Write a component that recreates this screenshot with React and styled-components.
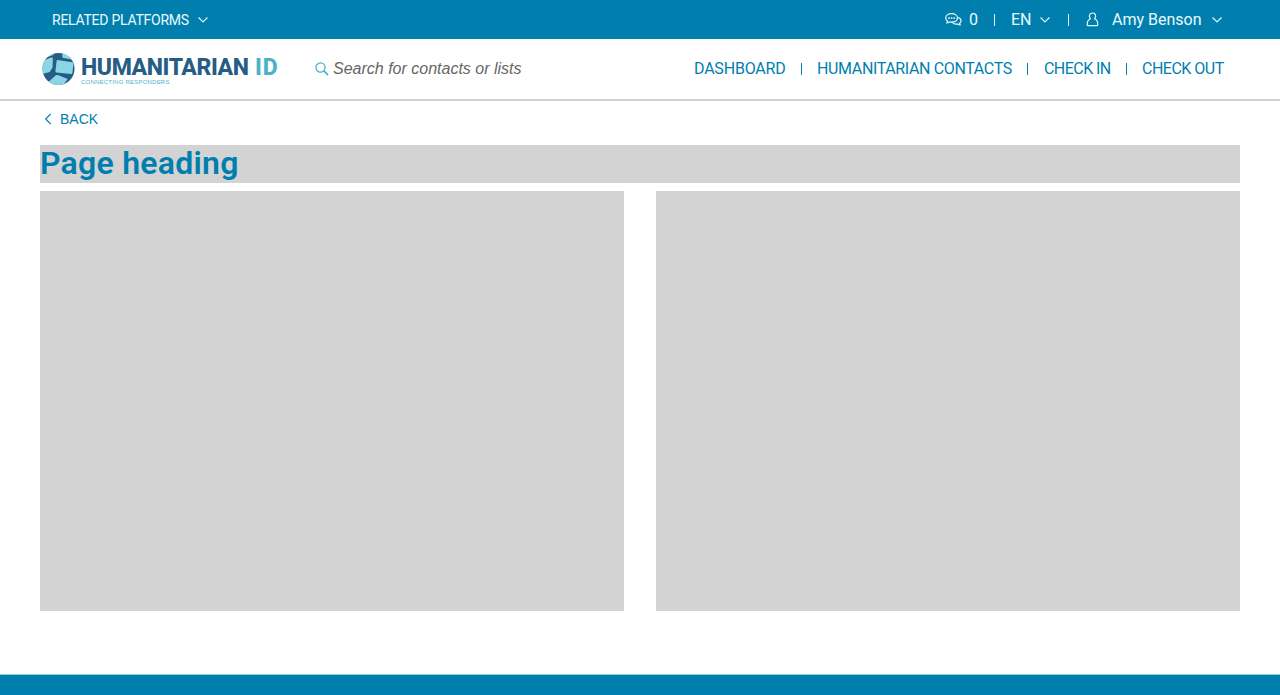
import React from "react";
import styled, { createGlobalStyle } from "styled-components";

const BLUE = "#007faf";
const GREY = "#d3d3d3";

const GlobalStyle = createGlobalStyle`
  *, *::before, *::after { box-sizing: border-box; }
  body { margin: 0; background: #fff; font-family: Roboto, "Liberation Sans", sans-serif; }
`;

const Page = styled.div`
  display: flex;
  flex-direction: column;
  height: 695px;
  overflow: hidden;
`;

const TopBar = styled.div`
  display: flex;
  justify-content: space-between;
  align-items: center;
  height: 39px;
  padding: 0 58px 0 52px;
  background: ${BLUE};
  color: #e9fafc;
`;

const Group = styled.div`
  display: flex;
  align-items: center;
`;

const Label = styled.span`
  width: ${(p) => p.$width}px;
  margin-left: ${(p) => p.$gap || 0}px;
  font-size: ${(p) => p.$size || 16}px;
  line-height: 20px;
  letter-spacing: ${(p) => p.$track || 0}px;
  white-space: nowrap;
`;

const Divider = styled.span`
  width: 1px;
  height: 12px;
  margin-left: ${(p) => p.$gap}px;
  background: currentColor;
`;

const Icon = styled.svg`
  display: block;
  flex: none;
  margin-left: ${(p) => p.$gap || 0}px;
  fill: none;
  stroke: currentColor;
  stroke-width: ${(p) => p.$stroke || 1.2};
  stroke-linecap: round;
  stroke-linejoin: round;
`;

const Header = styled.header`
  display: flex;
  align-items: center;
  height: 62px;
  padding: 0 55px 0 42px;
  border-bottom: 2px solid #d0d0d0;
`;

const Logo = styled.div`
  display: flex;
  width: 238px;
`;

const Brand = styled.div`
  display: flex;
  flex-direction: column;
  padding: 6px 0 0 6px;
`;

const BrandName = styled.div`
  display: flex;
  height: 20px;
  font-size: 23px;
  font-weight: 800;
  line-height: 20px;
  white-space: nowrap;
`;

const BrandPart = styled.span`
  width: ${(p) => p.$width}px;
  letter-spacing: ${(p) => p.$track}px;
  color: ${(p) => p.$color};
`;

const Tagline = styled.div`
  font: 6px/8px "Liberation Sans", sans-serif;
  letter-spacing: 0.22px;
  color: #4fb4cb;
  white-space: nowrap;
`;

const Search = styled.div`
  display: flex;
  align-items: center;
  flex: 1;
  padding-left: 35px;
  color: #45aecb;
`;

const Placeholder = styled.span`
  margin-left: 4px;
  font: italic 16px/20px "Liberation Sans", sans-serif;
  color: #666;
`;

const Nav = styled.nav`
  display: flex;
  align-items: center;
  color: ${BLUE};
`;

const Main = styled.main`
  flex: 1;
  padding: 0 40px;
`;

const Back = styled.div`
  display: flex;
  align-items: center;
  height: 44px;
  padding: 0 0 8px 4px;
  color: ${BLUE};
`;

const BackText = styled.span`
  margin-left: 8px;
  font: 14px/20px "Liberation Sans", sans-serif;
`;

const Heading = styled.h1`
  height: 38px;
  margin: 0 0 8px;
  background: ${GREY};
  color: ${BLUE};
  font-size: 32px;
  font-weight: 600;
  line-height: 37px;
  letter-spacing: 0.25px;
`;

const Columns = styled.div`
  display: grid;
  grid-template-columns: 1fr 1fr;
  gap: 32px;
`;

const Panel = styled.section`
  height: 420px;
  background: ${GREY};
`;

const Footer = styled.footer`
  height: 21px;
  border-top: 1px solid #8bd0e3;
  background: ${BLUE};
`;

const Chevron = ({ gap }) => (
  <Icon $gap={gap} width="10" height="6" viewBox="0 0 10 6">
    <path d="M.8.8 5 4.900 9.200.8" />
  </Icon>
);

const Globe = () => (
  <svg width="33" height="33" viewBox="0 0 33 33">
    <defs>
      <clipPath id="globe"><circle cx="16.500" cy="16.900" r="16" /></clipPath>
    </defs>
    <g clipPath="url(#globe)">
      <path fill="#265d85" d="M0 0h33v33H0z" />
      <path fill="#8bd6e6" d="M3 5.500 9 1l3.500-1-1.500 3.200z" />
      <path fill="#8bd6e6" d="m20 0 8 2 4 8-3.500-2.700-8-1.500z" />
      <path fill="#8bd6e6" d="M0 9.500 8.800 5.600q2-.7 2.100 1.200l-.4 8.700-2.800 4.500L0 22z" />
      <path fill="#8bd6e6" d="m15.700 8 14.600 2.300q1.200.2 1.100 1.300l-1 9.500q-.2 1.200-1.300 1L14.500 20.500q-1.200-.2-1.100-1.300l1.200-10.200q.1-1.100 1.100-1z" />
      <path fill="#8bd6e6" d="m7 29.500 6.500-6q1-.8 2.200-.4l10 3.800L21 33H9z" />
    </g>
  </svg>
);

export default function App() {
  return (
    <>
      <GlobalStyle />
      <Page>
        <TopBar>
          <Group>
            <Label $width={137} $size={14} $track={-0.25}>RELATED PLATFORMS</Label>
            <Chevron gap={9} />
          </Group>
          <Group>
            <Icon $stroke={1.2} width="17" height="14" viewBox="0 0 17 14">
              <path d="M6.600.7C3.200.7.7 2.500.7 5c0 1.300.7 2.400 1.800 3.100 0 .8-.4 1.400-.8 1.900 1.200 0 2-.5 2.700-1.100.7.2 1.400.3 2.200.3 3.400 0 5.900-1.800 5.900-4.200S10 .7 6.600.7z" />
              <path d="M13.500 4.700c1.600.5 2.600 1.600 2.600 3 0 1-.6 1.900-1.500 2.500 0 .8.4 1.300.7 1.700-1 0-1.700-.4-2.300-.9-2.300.5-4.500-.1-5.500-1.500" />
              <path d="M3.900 5h.3M6.500 5h.3M9.100 5h.3" strokeWidth="1.700" />
            </Icon>
            <Label $gap={7} $width={10}>0</Label>
            <Divider $gap={15} />
            <Label $gap={16} $width={21}>EN</Label>
            <Chevron gap={8} />
            <Divider $gap={18} />
            <Icon $gap={17} width="13" height="15" viewBox="0 0 13 15">
              <path d="M6.500 1C4.700 1 3.400 2.300 3.400 4.100c0 1.100.4 2 1.100 2.700C2.300 7.600 1.200 10 1.200 12.700q0 1 1 1h8.600q1 0 1-1c0-2.700-1.100-5.100-3.300-5.900.7-.7 1.100-1.600 1.100-2.700C9.600 2.300 8.300 1 6.500 1z" />
            </Icon>
            <Label $gap={13} $width={91}>Amy Benson</Label>
            <Chevron gap={9} />
          </Group>
        </TopBar>
        <Header>
          <Logo>
            <Globe />
            <Brand>
              <BrandName>
                <BrandPart $width={174} $track={-0.4} $color="#265d85">HUMANITARIAN</BrandPart>
                <BrandPart $width={24} $track={0.8} $color="#4db2c8">ID</BrandPart>
              </BrandName>
              <Tagline>CONNECTING RESPONDERS</Tagline>
            </Brand>
          </Logo>
          <Search>
            <Icon width="14" height="14" viewBox="0 0 14 14">
              <circle cx="5.500" cy="5.500" r="4.600" />
              <path d="m8.900 8.900 3.700 3.700" strokeWidth="1.500" />
            </Icon>
            <Placeholder>Search for contacts or lists</Placeholder>
          </Search>
          <Nav>
            <Label $width={91} $track={-0.2}>DASHBOARD</Label>
            <Divider $gap={16} />
            <Label $gap={15} $width={195} $track={-0.36}>HUMANITARIAN CONTACTS</Label>
            <Divider $gap={15} />
            <Label $gap={16} $width={67} $track={-0.55}>CHECK IN</Label>
            <Divider $gap={15} />
            <Label $gap={15} $width={83} $track={-0.5}>CHECK OUT</Label>
          </Nav>
        </Header>
        <Main>
          <Back>
            <Icon width="8" height="12" viewBox="0 0 8 12">
              <path d="M6.500 1.200 1.700 6l4.800 4.800" />
            </Icon>
            <BackText>BACK</BackText>
          </Back>
          <Heading>Page heading</Heading>
          <Columns>
            <Panel />
            <Panel />
          </Columns>
        </Main>
        <Footer />
      </Page>
    </>
  );
}
